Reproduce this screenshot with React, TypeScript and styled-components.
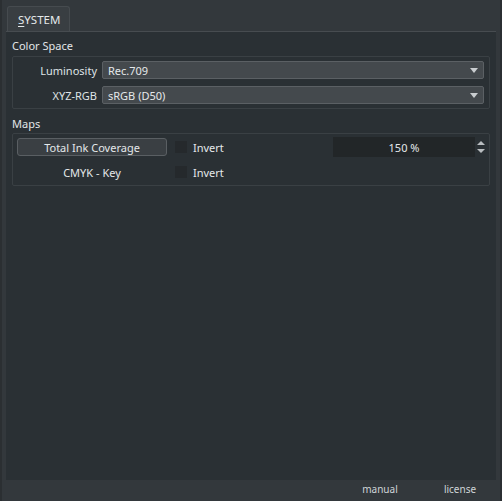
import React from "react"
import styled, { createGlobalStyle } from "styled-components"

const GlobalStyle = createGlobalStyle`
    html, body {
        margin: 0;
        padding: 0;
        background: #33383c;
    }
    body {
        font-family: "Noto Sans", "Open Sans", sans-serif;
        font-size: 11px;
        color: #dde2e5;
    }
`

const Window = styled.div`
    width: 502px;
    height: 501px;
    box-sizing: border-box;
    display: flex;
    flex-direction: column;
    background: #33383c;
    border-left: 2px solid #2b2f32;
    border-right: 2px solid #2b2f32;
    overflow: hidden;
`

const TabBar = styled.div`
    height: 31px;
    display: flex;
    align-items: flex-end;
    padding-left: 5px;
    box-sizing: border-box;
`

const Tab = styled.div`
    width: 63px;
    height: 25px;
    box-sizing: border-box;
    background: #393e42;
    border: 1px solid #464b4f;
    border-bottom: none;
    border-radius: 3px 3px 0 0;
    display: flex;
    align-items: center;
    padding-left: 10px;
    font-size: 11.5px;
    color: #e4e8ea;
    u {
        text-decoration-thickness: 1px;
        text-underline-offset: 2px;
    }
`

const Pane = styled.div`
    flex: 1;
    margin: 0 4px;
    background: #2a3034;
    border-top: 1px solid #474c50;
    padding: 6px 6px 0;
    display: flex;
    flex-direction: column;
`

const Heading = styled.div<{ $gap: number }>`
    line-height: 15px;
    height: 15px;
    margin-bottom: ${p => p.$gap}px;
    color: #e2e6e8;
`

const Group = styled.div<{ $pad: string; $gap: number }>`
    border: 1px solid #3a4044;
    border-radius: 2px;
    padding: ${p => p.$pad};
    display: flex;
    flex-direction: column;
    gap: ${p => p.$gap}px;
`

const FormRow = styled.div`
    display: flex;
    align-items: center;
    height: 18px;
`

const Label = styled.div`
    width: 84px;
    text-align: right;
    padding-right: 5px;
    color: #dfe3e6;
`

const Combo = styled.div`
    flex: 1;
    height: 18px;
    box-sizing: border-box;
    background: #44494d;
    border: 1px solid #5b6064;
    border-radius: 2px;
    display: flex;
    align-items: center;
    justify-content: space-between;
    padding: 0 4px 0 5px;
    color: #e4e8ea;
`

const ComboArrow = styled.span`
    width: 0;
    height: 0;
    border-left: 4px solid transparent;
    border-right: 4px solid transparent;
    border-top: 5px solid #c9cdd0;
    margin-right: 1px;
`

const MapRow = styled.div`
    display: flex;
    align-items: center;
    height: 18px;
`

const MapButton = styled.div`
    width: 150px;
    height: 18px;
    box-sizing: border-box;
    background: #3a3f43;
    border: 1px solid #5a5f63;
    border-radius: 3px;
    display: flex;
    align-items: center;
    justify-content: center;
    color: #e4e8ea;
`

const MapName = styled.div`
    width: 150px;
    text-align: center;
    color: #e4e8ea;
`

const Check = styled.span`
    width: 12px;
    height: 12px;
    background: #25292c;
    margin-left: 8px;
    margin-right: 6px;
`

const CheckText = styled.span`
    width: 140px;
    color: #e4e8ea;
`

const Spin = styled.div`
    width: 142px;
    height: 20px;
    background: #222628;
    display: flex;
    align-items: center;
    justify-content: center;
    color: #e4e8ea;
`

const SpinArrows = styled.div`
    display: flex;
    flex-direction: column;
    gap: 4px;
    margin-left: 2px;
    span {
        width: 0;
        height: 0;
        border-left: 4px solid transparent;
        border-right: 4px solid transparent;
    }
    span:first-child {
        border-bottom: 4px solid #b9bdc0;
    }
    span:last-child {
        border-top: 4px solid #b9bdc0;
    }
`

const Footer = styled.div`
    height: 21px;
    display: flex;
    justify-content: flex-end;
    align-items: center;
    padding-bottom: 3px;
    box-sizing: border-box;
`

const FooterLink = styled.div`
    width: 80px;
    text-align: center;
    font-size: 10px;
    color: #cfd4d8;
`

export default function App() {
    return (
        <Window>
            <GlobalStyle />
            <TabBar>
                <Tab><span><u>S</u>YSTEM</span></Tab>
            </TabBar>
            <Pane>
                <Heading $gap={3}>Color Space</Heading>
                <Group $pad="4px 5px 4px 0" $gap={7}>
                    <FormRow>
                        <Label>Luminosity</Label>
                        <Combo>Rec.709<ComboArrow /></Combo>
                    </FormRow>
                    <FormRow>
                        <Label>XYZ-RGB</Label>
                        <Combo>sRGB (D50)<ComboArrow /></Combo>
                    </FormRow>
                </Group>
                <Heading $gap={2} style={{ marginTop: 7 }}>Maps</Heading>
                <Group $pad="4px 4px 4px 4px" $gap={7}>
                    <MapRow>
                        <MapButton>Total Ink Coverage</MapButton>
                        <Check />
                        <CheckText>Invert</CheckText>
                        <Spin>150 %</Spin>
                        <SpinArrows><span /><span /></SpinArrows>
                    </MapRow>
                    <MapRow>
                        <MapName>CMYK - Key</MapName>
                        <Check />
                        <CheckText>Invert</CheckText>
                    </MapRow>
                </Group>
            </Pane>
            <Footer>
                <FooterLink>manual</FooterLink>
                <FooterLink>license</FooterLink>
            </Footer>
        </Window>
    )
}
